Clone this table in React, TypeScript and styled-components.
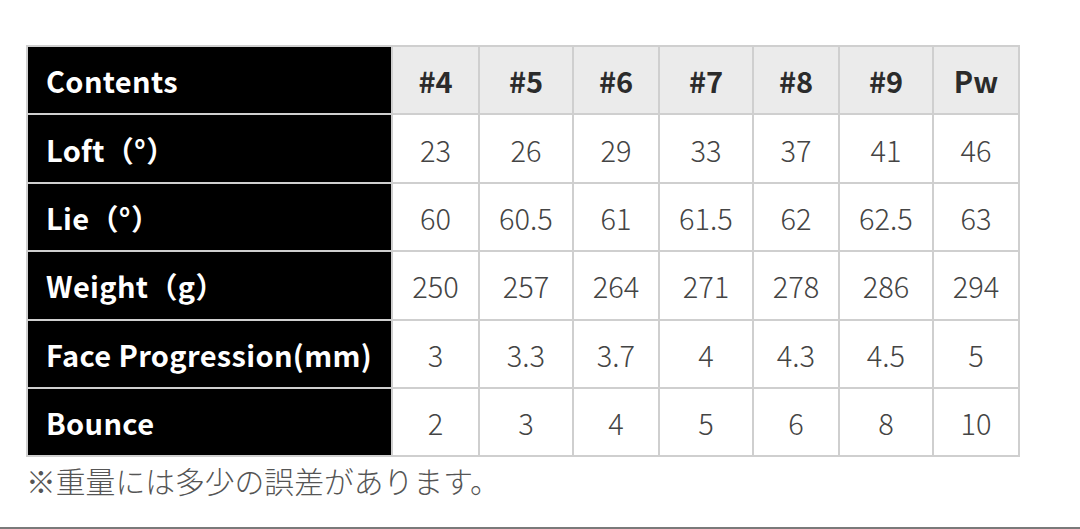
import React from 'react'
import styled, { createGlobalStyle } from 'styled-components'

const GlobalStyle = createGlobalStyle`
html, body {
    margin: 0;
    padding: 0;
    background: #fff;
}
body {
    font-family: "Noto Sans CJK JP", "Noto Sans", sans-serif;
}
`

const Page = styled.div`
width : 1080px;
height : 529px;
box-sizing : border-box;
padding : 45px 0 0 26px;
display : flex;
flex-direction : column;
border-bottom : 2px solid #7a7a7a;
`

const SpecTable = styled.table`
border-collapse : collapse;
table-layout : fixed;
width : 992px;
`

const LabelCell = styled.th`
background : #000;
color : #fff;
font-size : 29px;
font-weight : 700;
text-align : left;
padding : 0 0 0 18px;
height : 66.4px;
border : 2px solid #cfcfcf;
white-space : nowrap;
letter-spacing : 0.35px;
`

const HeadCell = styled.th`
background : #ebebeb;
color : #2b2b2b;
font-size : 29px;
font-weight : 700;
text-align : center;
height : 66.4px;
border : 2px solid #cfcfcf;
padding : 0;
`

const ValueCell = styled.td`
background : #fff;
color : #444;
font-size : 29px;
font-weight : 300;
text-align : center;
height : 66.4px;
border : 2px solid #cfcfcf;
padding : 0;
`

const Note = styled.p`
margin : 6px 0 0 0;
font-size : 29.8px;
font-weight : 300;
color : #555;
line-height : 1.2;
`

const columns = ['#4', '#5', '#6', '#7', '#8', '#9', 'Pw']
const widths = [365, 87, 94, 86, 94, 86, 94, 86]

const rows: Array<{ label: string; values: string[] }> = [
    { label: 'Loft（°）', values: ['23', '26', '29', '33', '37', '41', '46'] },
    { label: 'Lie（°）', values: ['60', '60.5', '61', '61.5', '62', '62.5', '63'] },
    { label: 'Weight（g）', values: ['250', '257', '264', '271', '278', '286', '294'] },
    { label: 'Face Progression(mm)', values: ['3', '3.3', '3.7', '4', '4.3', '4.5', '5'] },
    { label: 'Bounce', values: ['2', '3', '4', '5', '6', '8', '10'] },
]

function App() {
    return (
        <>
            <GlobalStyle />
            <Page>
                <SpecTable>
                    <colgroup>
                        {widths.map((w, i) => <col key={i} style={{ width: w }} />)}
                    </colgroup>
                    <thead>
                        <tr>
                            <LabelCell>Contents</LabelCell>
                            {columns.map(c => <HeadCell key={c}>{c}</HeadCell>)}
                        </tr>
                    </thead>
                    <tbody>
                        {rows.map(r => (
                            <tr key={r.label}>
                                <LabelCell>{r.label}</LabelCell>
                                {r.values.map((v, i) => <ValueCell key={i}>{v}</ValueCell>)}
                            </tr>
                        ))}
                    </tbody>
                </SpecTable>
                <Note>※重量には多少の誤差があります。</Note>
            </Page>
        </>
    )
}

export default App
